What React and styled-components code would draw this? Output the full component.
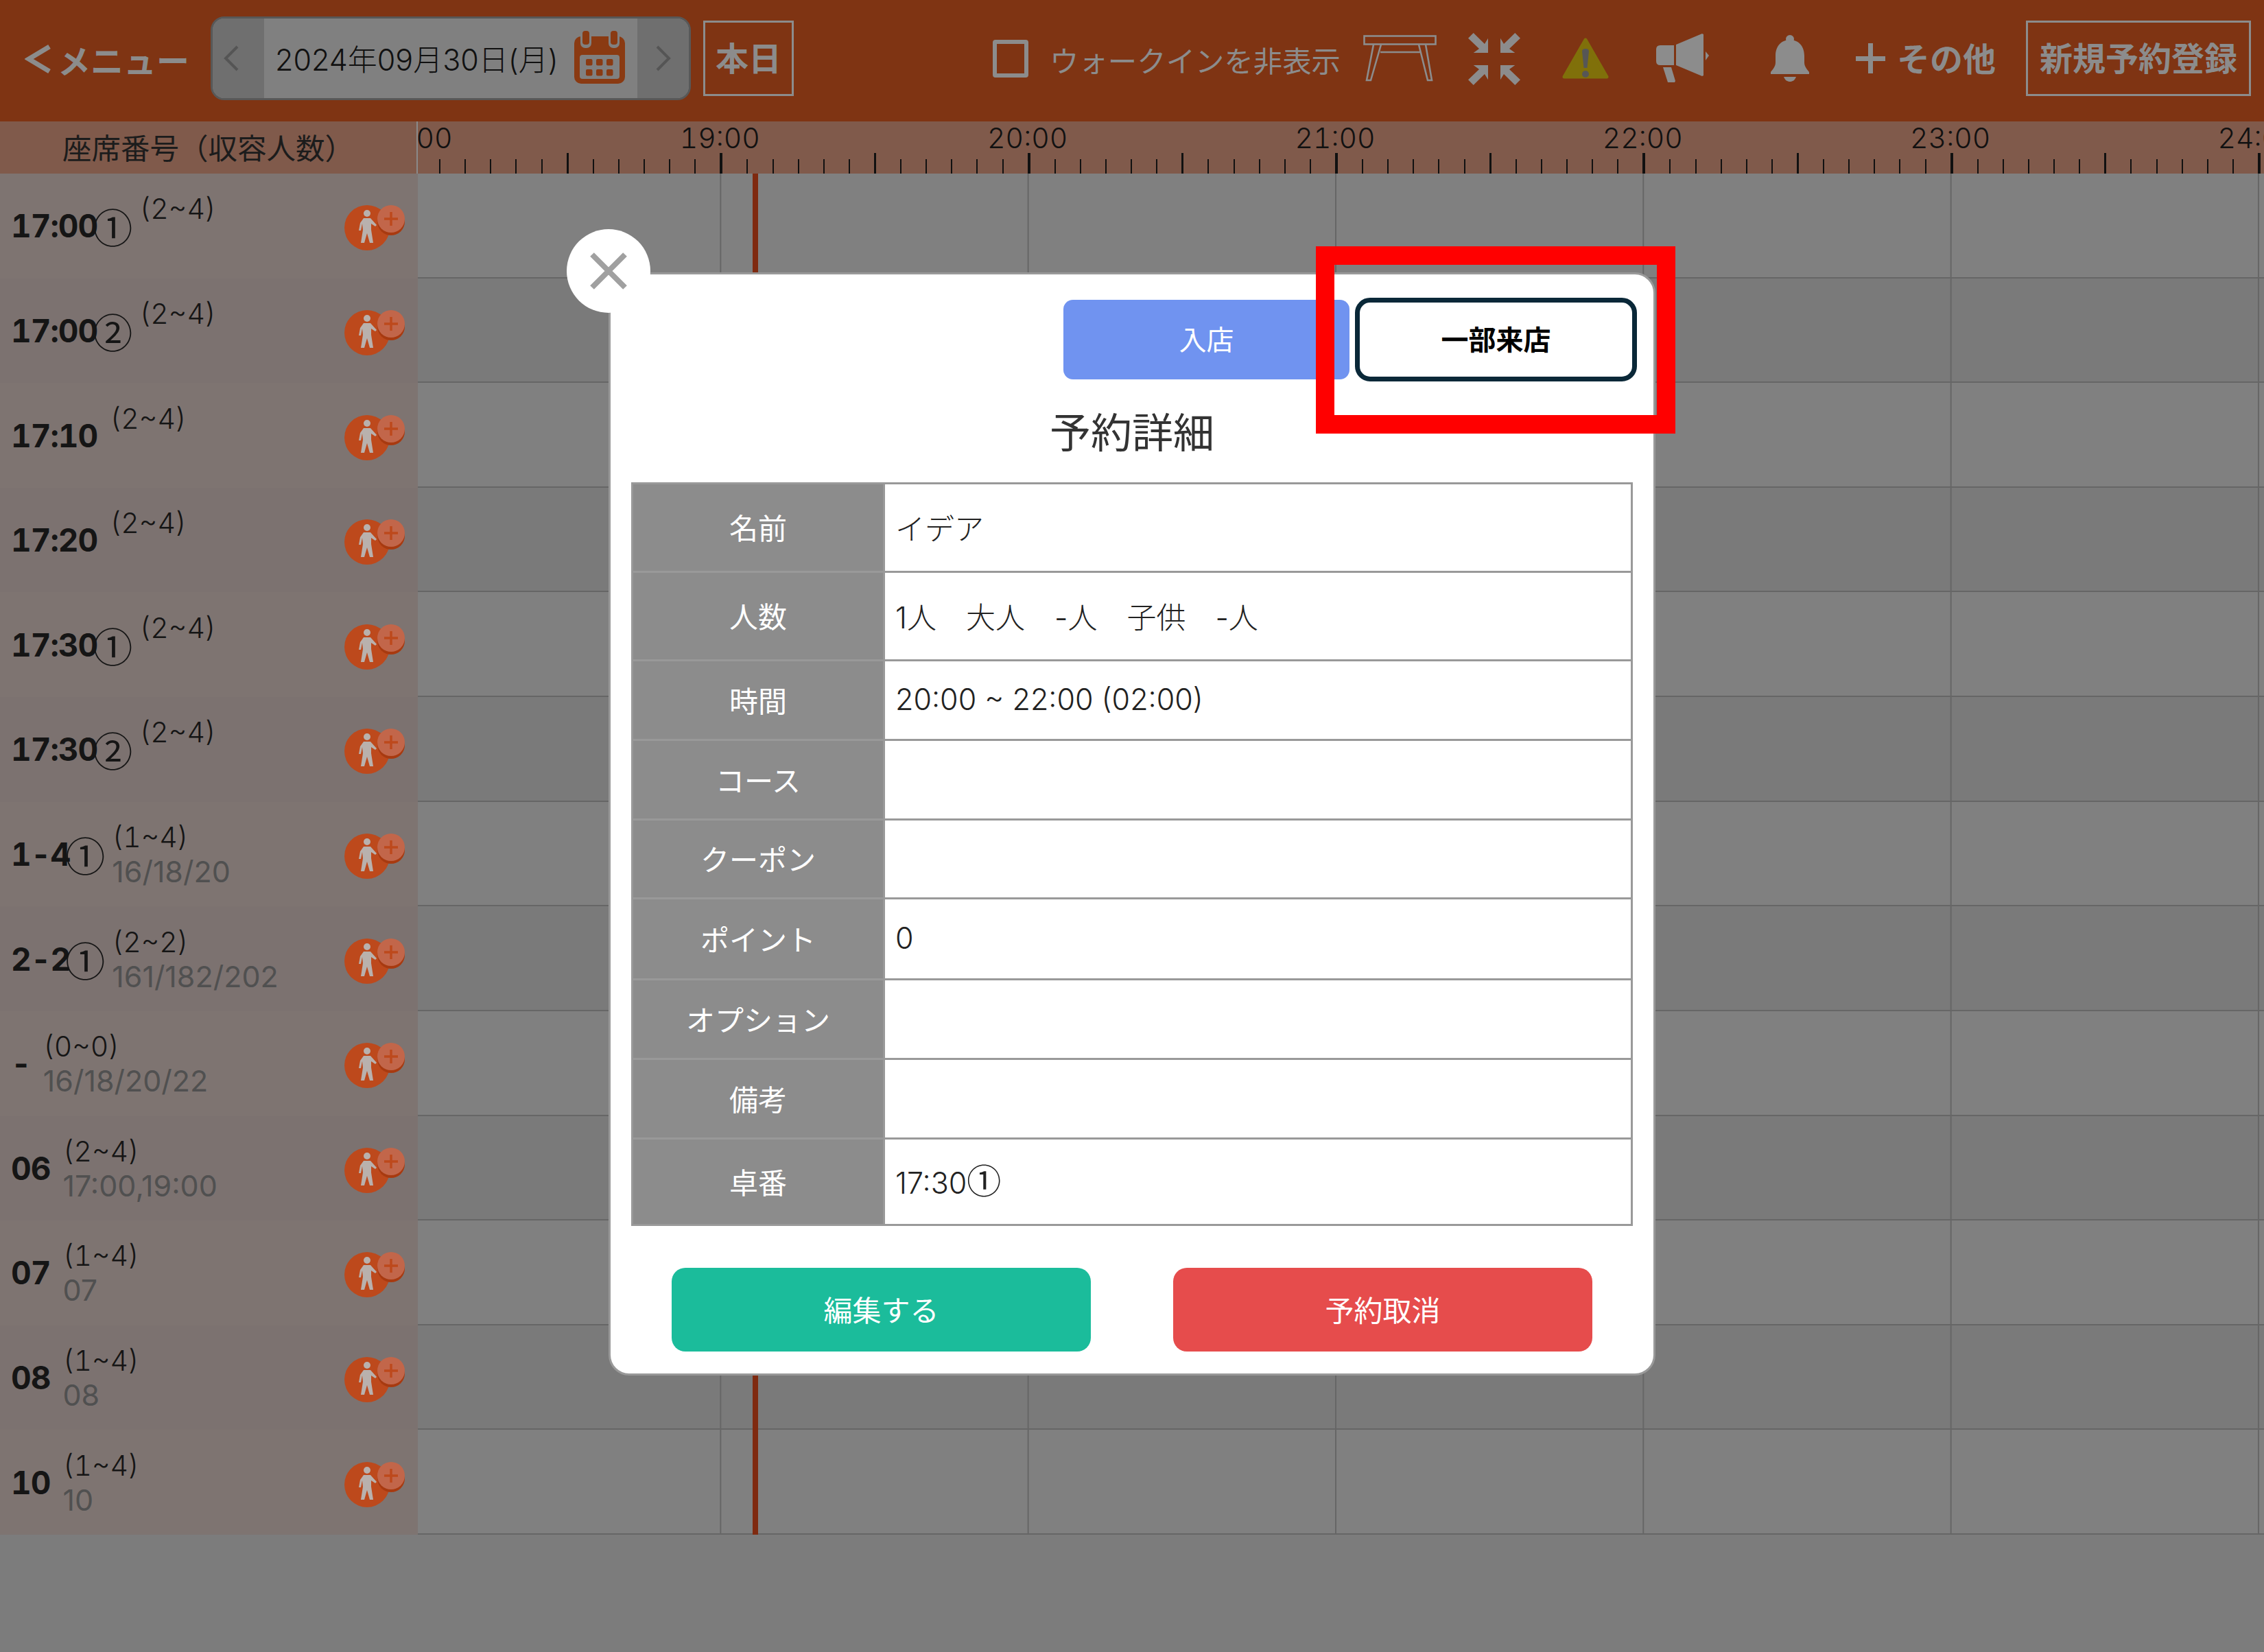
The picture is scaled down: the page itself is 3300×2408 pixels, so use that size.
import React from "react";
import styled, { createGlobalStyle } from "styled-components";

const FONT = `Inter, "Noto Sans CJK JP", sans-serif`;
const JP = `"Noto Sans CJK JP", sans-serif`;
const HOUR = 448.33;
const MUTED = "#8c8c8c";

const seats = [
  { name: "17:00", mark: "①", cap: "(2~4)" },
  { name: "17:00", mark: "②", cap: "(2~4)" },
  { name: "17:10", cap: "(2~4)" },
  { name: "17:20", cap: "(2~4)" },
  { name: "17:30", mark: "①", cap: "(2~4)" },
  { name: "17:30", mark: "②", cap: "(2~4)" },
  { name: "1-4", mark: "①", cap: "(1~4)", sub: "16/18/20" },
  { name: "2-2", mark: "①", cap: "(2~2)", sub: "161/182/202" },
  { name: "-", cap: "(0~0)", sub: "16/18/20/22" },
  { name: "06", cap: "(2~4)", sub: "17:00,19:00" },
  { name: "07", cap: "(1~4)", sub: "07" },
  { name: "08", cap: "(1~4)", sub: "08" },
  { name: "10", cap: "(1~4)", sub: "10" },
];

const details = [
  { label: "名前", value: "イデア", height: 129 },
  { label: "人数", value: "1人\u3000大人\u3000-人\u3000子供\u3000-人", height: 129 },
  { label: "時間", value: "20:00 ~ 22:00 (02:00)", height: 116 },
  { label: "コース", value: "", height: 116 },
  { label: "クーポン", value: "", height: 115 },
  { label: "ポイント", value: "0", height: 118 },
  { label: "オプション", value: "", height: 116 },
  { label: "備考", value: "", height: 116 },
  { label: "卓番", value: "17:30", mark: "①", height: 126 },
];

const hours = [18, 19, 20, 21, 22, 23, 24];
const ticks = Array.from({ length: 12 }, (_, i) => i);

const GlobalStyle = createGlobalStyle`
  html, body {
    margin: 0;
    padding: 0;
    background: #7c7c7c;
  }
  * {
    box-sizing: border-box;
  }
`;

const Page = styled.div`
  position: relative;
  width: 3300px;
  height: 2408px;
  overflow: hidden;
  display: flex;
  flex-direction: column;
  background: #7c7c7c;
  font-family: ${FONT};
`;

const Header = styled.header`
  height: 177px;
  flex: none;
  display: flex;
  align-items: center;
  justify-content: space-between;
  padding: 0 19px 0 36px;
  background: #7f3413;
  color: ${MUTED};
`;

const HeaderGroup = styled.div`
  display: flex;
  align-items: center;
`;

const MenuLink = styled.div`
  width: 271px;
  display: flex;
  align-items: center;
  gap: 8px;
  padding-bottom: 6px;
  font-family: ${JP};
  font-size: 48px;
  font-weight: 700;
  white-space: nowrap;
`;

const DatePicker = styled.div`
  width: 700px;
  height: 122px;
  display: flex;
  border: 3px solid #585858;
  border-radius: 20px;
  background: #808080;
  overflow: hidden;
  margin-bottom: 8px;
`;

const PickerArrow = styled.div`
  width: 75px;
  flex: none;
  display: flex;
  align-items: center;
  justify-content: center;
  padding-right: ${(p) => (p.$left ? 22 : 0)}px;
  background: #6f6f6f;
`;

const PickerDate = styled.div`
  flex: 1;
  display: flex;
  align-items: center;
  justify-content: space-between;
  padding: 0 18px 2px 16px;
  color: #111;
  font-size: 43px;
  font-weight: 300;
  white-space: nowrap;
`;

const OutlineButton = styled.div`
  width: ${(p) => p.$width}px;
  height: 110px;
  margin-left: ${(p) => p.$ml}px;
  margin-bottom: 8px;
  padding-bottom: 5px;
  display: flex;
  align-items: center;
  justify-content: center;
  border: 3px solid ${MUTED};
  font-family: ${JP};
  font-size: 48px;
  font-weight: 700;
  white-space: nowrap;
`;

const CheckBox = styled.div`
  width: 52px;
  height: 55px;
  border: 6px solid ${MUTED};
  border-radius: 4px;
  margin-bottom: 6px;
`;

const HeaderLabel = styled.div`
  margin-left: 31px;
  margin-bottom: 4px;
  font-family: ${JP};
  font-size: 42.4px;
  font-weight: 400;
  white-space: nowrap;
`;

const IconSlot = styled.div`
  display: flex;
  margin-left: ${(p) => p.$ml}px;
  margin-bottom: ${(p) => p.$mb || 8}px;
`;

const OtherText = styled.div`
  margin-left: 17px;
  margin-bottom: 11px;
  font-family: ${JP};
  font-size: 48px;
  font-weight: 700;
  white-space: nowrap;
`;

const Ruler = styled.div`
  height: 76px;
  flex: none;
  display: flex;
  background: #805a4b;
`;

const RulerTitle = styled.div`
  width: 609px;
  flex: none;
  display: flex;
  align-items: center;
  justify-content: center;
  padding-bottom: 4px;
  border-right: 2px solid #8a8a8a;
  color: #1c1c1c;
  font-family: ${JP};
  font-size: 42.5px;
  font-weight: 400;
  white-space: nowrap;
`;

const RulerTrack = styled.div`
  flex: 1;
  display: flex;
  overflow: hidden;
`;

const HourCell = styled.div`
  position: relative;
  width: ${HOUR}px;
  flex: none;
  display: flex;
  align-items: flex-end;
  margin-left: ${(p) => p.$ml || 0}px;
`;

const HourLabel = styled.span`
  position: absolute;
  top: -1px;
  left: 0;
  transform: translateX(-50%);
  color: #111;
  font-size: 41px;
  font-weight: 300;
  font-variant-numeric: tabular-nums;
`;

const TickCell = styled.div`
  flex: 1;
  height: ${(p) => (p.$major ? 30 : 21)}px;
  align-self: flex-end;
  border-left: ${(p) => (p.$hour ? 4 : p.$major ? 3 : 2)}px solid #111;
`;

const Body = styled.div`
  display: flex;
  height: 1984px;
  flex: none;
`;

const SeatColumn = styled.div`
  width: 609px;
  flex: none;
  display: grid;
  grid-template-rows: repeat(13, 1fr);
`;

const SeatRow = styled.div`
  display: flex;
  align-items: center;
  padding: 0 19px 0 16px;
  background: ${(p) => (p.$odd ? "#7c7270" : "#7e7471")};
`;

const SeatName = styled.div`
  display: flex;
  align-items: center;
  font-size: 46px;
  font-weight: 700;
  letter-spacing: -1px;
  font-variant-numeric: tabular-nums;
  color: #151515;
  white-space: nowrap;
`;

const CircledMark = styled.span`
  font-family: ${JP};
  font-weight: 400;
  font-size: ${(p) => p.$size}px;
  line-height: 1;
  margin: 0 ${(p) => p.$mx || 0}px;
`;

const SeatMeta = styled.div`
  margin-left: 18px;
  font-size: 41px;
  font-weight: 300;
  line-height: 50px;
  font-variant-numeric: tabular-nums;
  color: #151515;
  white-space: nowrap;
`;

const SeatSub = styled.div`
  height: 50px;
  font-size: 43px;
  font-weight: 400;
  font-variant-numeric: normal;
  color: #505050;
`;

const WalkIn = styled.div`
  display: flex;
  margin-left: auto;
  margin-top: 6px;
`;

const Timeline = styled.div`
  position: relative;
  flex: 1;
  display: grid;
  grid-template-rows: repeat(13, 1fr);
`;

const TimeRow = styled.div`
  border-bottom: 2px solid #666;
  background-color: ${(p) => (p.$odd ? "#7a7a7a" : "#808080")};
  background-image: linear-gradient(90deg, #666 2px, transparent 2px);
  background-size: ${HOUR}px 100%;
  background-position: -8px 0;
`;

const NowLine = styled.div`
  position: absolute;
  top: 0;
  bottom: 0;
  left: 488px;
  width: 8px;
  background: #7f2a10;
`;

const Modal = styled.div`
  position: absolute;
  top: 397px;
  left: 887px;
  width: 1526px;
  height: 1608px;
  display: flex;
  flex-direction: column;
  padding: 34px 30px 0;
  background: #fff;
  border: 3px solid #999;
  border-radius: 30px;
`;

const CloseButton = styled.div`
  position: absolute;
  top: -66px;
  left: -64px;
  width: 122px;
  height: 122px;
  display: flex;
  align-items: center;
  justify-content: center;
  border-radius: 50%;
  background: #fff;
`;

const ModalActions = styled.div`
  display: flex;
  align-items: center;
  justify-content: flex-end;
  gap: 8px;
  margin-right: -6px;
`;

const StatusButton = styled.div`
  width: 417px;
  height: 116px;
  display: flex;
  align-items: center;
  justify-content: center;
  padding-bottom: 4px;
  border-radius: 14px;
  background: #7093f0;
  color: #fff;
  font-family: ${JP};
  font-size: 40px;
`;

const SelectedButton = styled(StatusButton)`
  width: 411px;
  height: 122px;
  border: 7px solid #0a2838;
  border-radius: 22px;
  background: #fff;
  color: #000;
  font-weight: 700;
`;

const ModalTitle = styled.h2`
  height: 147px;
  margin: 0;
  padding-bottom: 6px;
  display: flex;
  align-items: center;
  justify-content: center;
  color: #333;
  font-family: ${JP};
  font-size: 60px;
  font-weight: 400;
`;

const DetailTable = styled.table`
  width: 1460px;
  border-collapse: collapse;
  table-layout: fixed;
  border: 3px solid #999;
`;

const DetailRow = styled.tr`
  height: ${(p) => p.$height}px;
`;

const DetailLabel = styled.th`
  width: 367px;
  padding: 0 0 3px;
  border: 3px solid #999;
  background: #8c8c8c;
  color: #fff;
  font-family: ${JP};
  font-size: 42px;
  font-weight: 400;
`;

const DetailValue = styled.td`
  padding: 0 0 3px 15px;
  border: 3px solid #999;
  color: #222;
  font-size: 43px;
  font-weight: 300;
  white-space: nowrap;
`;

const ModalFooter = styled.div`
  display: flex;
  justify-content: center;
  gap: 120px;
  margin-top: 61px;
`;

const FooterButton = styled.div`
  width: 611px;
  height: 122px;
  display: flex;
  align-items: center;
  justify-content: center;
  padding-bottom: 3px;
  border-radius: 20px;
  background: ${(p) => (p.$danger ? "#e64c4c" : "#1bbc9b")};
  color: #fff;
  font-family: ${JP};
  font-size: 42px;
`;

const Highlight = styled.div`
  position: absolute;
  top: 359px;
  left: 1918px;
  width: 524px;
  height: 273px;
  border: 27px solid #f00;
`;

const Chevron = ({ left }) => (
  <svg width="24" height="38" viewBox="0 0 24 38">
    <polyline
      points={left ? "21,2 4,19 21,36" : "3,2 20,19 3,36"}
      fill="none"
      stroke="#555"
      strokeWidth="4"
    />
  </svg>
);

const CalendarIcon = () => (
  <svg width="74" height="77" viewBox="0 0 74 77">
    <rect y="8" width="74" height="69" rx="10" fill="#8a3a12" />
    <rect x="9" y="-2" width="16" height="27" rx="7" fill="#808080" />
    <rect x="50" y="-2" width="16" height="27" rx="7" fill="#808080" />
    <rect x="12" width="10" height="20" rx="4" fill="#8a3a12" />
    <rect x="53" width="10" height="20" rx="4" fill="#8a3a12" />
    <rect x="8" y="35" width="58" height="35" rx="4" fill="#808080" />
    {[17, 32, 47].map((x) =>
      [41, 56].map((y) => (
        <rect key={`${x}-${y}`} x={x} y={y} width="9.5" height="9.5" rx="2" fill="#8a3a12" />
      ))
    )}
  </svg>
);

const TableIcon = () => (
  <svg width="107" height="68" viewBox="0 0 107 68" fill="none" stroke={MUTED} strokeWidth="2.6">
    <rect x="1.5" y="1.5" width="104" height="12" />
    <path d="M15 14L5 66H11L26 14M81 14L94 66H100L91 14M25 25H84" />
  </svg>
);

const CompressIcon = () => {
  const arrow = "M7.7 0L24 16L29 7.7V29H7.7L16 23L0 7.7Z";
  return (
    <svg width="76" height="76" viewBox="0 0 76 76" fill={MUTED}>
      <path d={arrow} />
      <path d={arrow} transform="translate(76 0) scale(-1 1)" />
      <path d={arrow} transform="translate(0 76) scale(1 -1)" />
      <path d={arrow} transform="translate(76 76) scale(-1 -1)" />
    </svg>
  );
};

const WarningIcon = () => (
  <svg width="68" height="60" viewBox="0 0 68 60">
    <path d="M34 3L65 57H3Z" fill="#80700a" stroke="#80700a" strokeWidth="5" strokeLinejoin="round" />
    <path d="M29 20Q29 16 34 16Q39 16 39 20L36.5 44H31.5Z" fill="#565656" />
    <circle cx="34" cy="53" r="5" fill="#565656" />
  </svg>
);

const MegaphoneIcon = () => (
  <svg width="78" height="72" viewBox="0 0 78 72" fill={MUTED}>
    <path d="M6 17H26V46H6Q0 46 0 40V23Q0 17 6 17Z" />
    <path d="M29 16L67 0L69 1V61L67 62L29 46Z" />
    <path d="M72 26L77 32L72 39Z" />
    <path d="M10 49H22L28 69L27 71H17Z" />
  </svg>
);

const BellIcon = () => (
  <svg width="56" height="68" viewBox="0 0 56 68" fill={MUTED}>
    <circle cx="28" cy="6" r="6" />
    <path d="M28 7C16 7 7 16 7 30V40C7 46 3 50 0 54V57H56V54C53 50 49 46 49 40V30C49 16 40 7 28 7Z" />
    <path d="M19 61H37C35 66 32 68 28 68C24 68 21 66 19 61Z" />
  </svg>
);

const PlusIcon = () => (
  <svg width="43" height="44" viewBox="0 0 43 44" fill={MUTED}>
    <rect x="18" width="7" height="44" />
    <rect y="19" width="43" height="7" />
  </svg>
);

const WalkInIcon = () => (
  <svg width="88" height="66" viewBox="0 0 88 66">
    <circle cx="33" cy="33" r="33" fill="#bd491c" />
    <circle cx="68" cy="24" r="20" fill="#a83a10" />
    <circle cx="68" cy="20" r="20" fill="#c2664a" />
    <path d="M58 20H78M68 10V30" stroke="#bd491c" strokeWidth="3.5" />
    <circle cx="33" cy="12" r="5" fill="#b9b1ad" />
    <path
      d="M28 19H38L47 29L45 31L39 27V36L42 55H37L33 41L29 55H24L27 36L26 27L24 37H21L23 26Z"
      fill="#b9b1ad"
    />
  </svg>
);

const CloseIcon = () => (
  <svg width="54" height="54" viewBox="0 0 54 54">
    <path d="M3 3L51 51M51 3L3 51" stroke="#a0a0a0" strokeWidth="8" />
  </svg>
);

const App = () => {
  return (
    <Page>
      <GlobalStyle />
      <Header>
        <HeaderGroup>
          <MenuLink>
            <svg width="40" height="42" viewBox="0 0 40 42">
              <polyline points="36,3 6,21 36,39" fill="none" stroke={MUTED} strokeWidth="7" />
            </svg>
            メニュー
          </MenuLink>
          <DatePicker>
            <PickerArrow $left>
              <Chevron left />
            </PickerArrow>
            <PickerDate>
              2024年09月30日(月)
              <CalendarIcon />
            </PickerDate>
            <PickerArrow>
              <Chevron />
            </PickerArrow>
          </DatePicker>
          <OutlineButton $width={132} $ml={18}>
            本日
          </OutlineButton>
        </HeaderGroup>
        <HeaderGroup>
          <CheckBox />
          <HeaderLabel>ウォークインを非表示</HeaderLabel>
          <IconSlot $ml={33}>
            <TableIcon />
          </IconSlot>
          <IconSlot $ml={46} $mb={6}>
            <CompressIcon />
          </IconSlot>
          <IconSlot $ml={61}>
            <WarningIcon />
          </IconSlot>
          <IconSlot $ml={69}>
            <MegaphoneIcon />
          </IconSlot>
          <IconSlot $ml={89}>
            <BellIcon />
          </IconSlot>
          <IconSlot $ml={68} $mb={0}>
            <PlusIcon />
          </IconSlot>
          <OtherText>その他</OtherText>
          <OutlineButton $width={328} $ml={44}>
            新規予約登録
          </OutlineButton>
        </HeaderGroup>
      </Header>

      <Ruler>
        <RulerTitle>座席番号（収容人数）</RulerTitle>
        <RulerTrack>
          {hours.map((h, idx) => (
            <HourCell key={h} $ml={idx === 0 ? -8 : 0}>
              <HourLabel>{h}:00</HourLabel>
              {ticks.map((t) => (
                <TickCell key={t} $major={t % 6 === 0} $hour={t === 0} />
              ))}
            </HourCell>
          ))}
        </RulerTrack>
      </Ruler>

      <Body>
        <SeatColumn>
          {seats.map((seat, i) => (
            <SeatRow key={seat.name + i} $odd={i % 2 === 1}>
              <SeatName>
                {seat.name}
                {seat.mark && (
                  <CircledMark $size={58} $mx={-7}>
                    {seat.mark}
                  </CircledMark>
                )}
              </SeatName>
              <SeatMeta>
                <div>{seat.cap}</div>
                <SeatSub>{seat.sub}</SeatSub>
              </SeatMeta>
              <WalkIn>
                <WalkInIcon />
              </WalkIn>
            </SeatRow>
          ))}
        </SeatColumn>
        <Timeline>
          {seats.map((seat, i) => (
            <TimeRow key={seat.name + i} $odd={i % 2 === 1} />
          ))}
          <NowLine />
        </Timeline>
      </Body>

      <Modal>
        <CloseButton>
          <CloseIcon />
        </CloseButton>
        <ModalActions>
          <StatusButton>入店</StatusButton>
          <SelectedButton>一部来店</SelectedButton>
        </ModalActions>
        <ModalTitle>予約詳細</ModalTitle>
        <DetailTable>
          <tbody>
            {details.map((row) => (
              <DetailRow key={row.label} $height={row.height}>
                <DetailLabel>{row.label}</DetailLabel>
                <DetailValue>
                  {row.value}
                  {row.mark && <CircledMark $size={50}>{row.mark}</CircledMark>}
                </DetailValue>
              </DetailRow>
            ))}
          </tbody>
        </DetailTable>
        <ModalFooter>
          <FooterButton>編集する</FooterButton>
          <FooterButton $danger>予約取消</FooterButton>
        </ModalFooter>
      </Modal>
      <Highlight />
    </Page>
  );
};

export default App;
